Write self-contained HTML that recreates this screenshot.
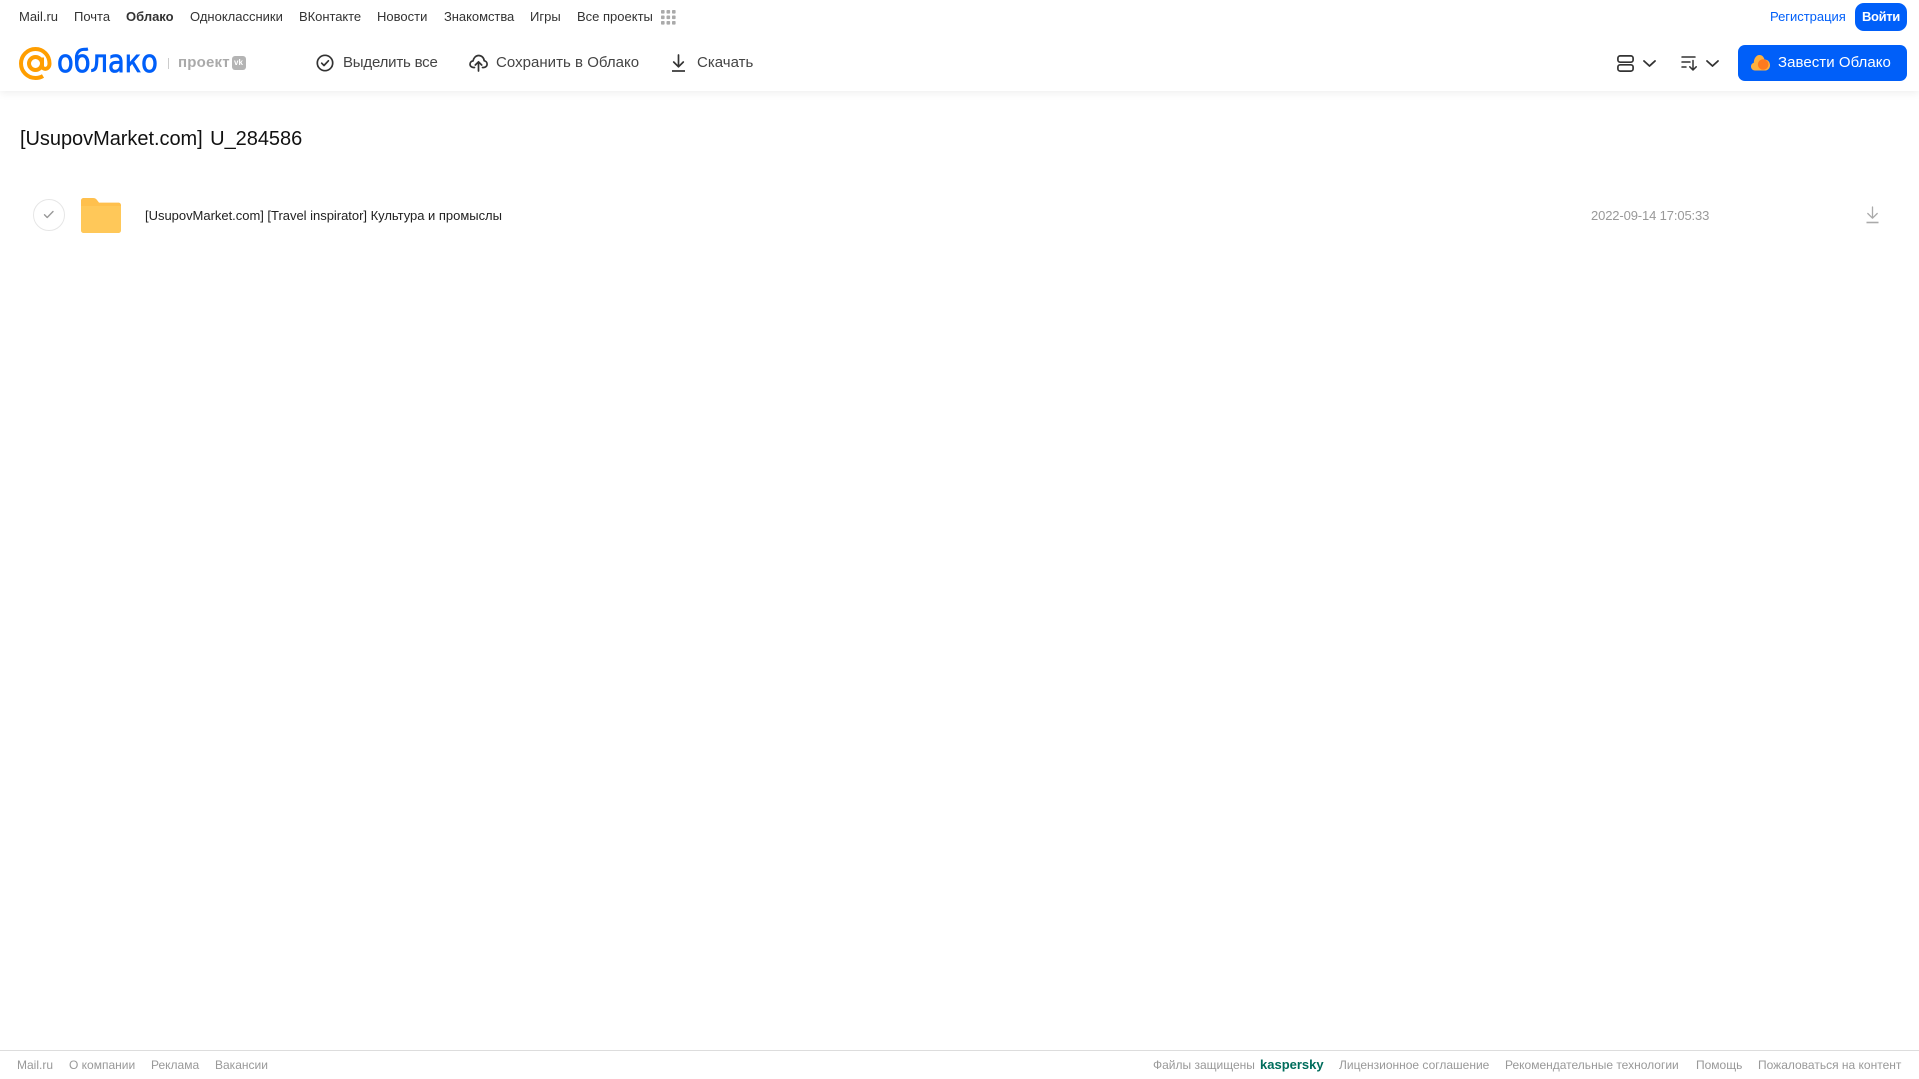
<!DOCTYPE html>
<html lang="ru"><head><meta charset="utf-8"><title>Облако</title>
<style>
html,body{margin:0;padding:0;background:#fff;}
body{width:1919px;height:1079px;position:relative;overflow:hidden;font-family:"Liberation Sans",Arial,sans-serif;}
.t{position:absolute;white-space:nowrap;line-height:20px;}
.n{top:7px;font-size:13px;color:#333;}
.b{top:53px;font-size:15px;color:#444;}
.f{top:1055px;font-size:12px;color:#999;}
svg{position:absolute;display:block;}
#hd{position:absolute;left:0;top:0;width:1919px;height:91px;background:#fff;box-shadow:0 2px 8px rgba(0,0,0,.07);}
</style></head><body>
<div id="hd"></div>
<span class="t n" style="left:19px">Mail.ru</span>
<span class="t n" style="left:74px">Почта</span>
<span class="t n" style="left:126px;font-weight:bold">Облако</span>
<span class="t n" style="left:190px">Одноклассники</span>
<span class="t n" style="left:299px;letter-spacing:-.05px">ВКонтакте</span>
<span class="t n" style="left:377px">Новости</span>
<span class="t n" style="left:444px;letter-spacing:-.05px">Знакомства</span>
<span class="t n" style="left:530px">Игры</span>
<span class="t n" style="left:577px">Все проекты</span>
<svg style="left:661px;top:10px" width="15" height="15" fill="#aaa"><rect x="0" y="0" width="3.6" height="3.6" rx=".8"/><rect x="5.5" y="0" width="3.6" height="3.6" rx=".8"/><rect x="11" y="0" width="3.6" height="3.6" rx=".8"/><rect x="0" y="5.5" width="3.6" height="3.6" rx=".8"/><rect x="5.5" y="5.5" width="3.6" height="3.6" rx=".8"/><rect x="11" y="5.5" width="3.6" height="3.6" rx=".8"/><rect x="0" y="11" width="3.6" height="3.6" rx=".8"/><rect x="5.5" y="11" width="3.6" height="3.6" rx=".8"/><rect x="11" y="11" width="3.6" height="3.6" rx=".8"/></svg>
<span class="t n" style="left:1770px;color:#005ff9;letter-spacing:-.02px">Регистрация</span>
<div style="position:absolute;left:1855px;top:3px;width:52px;height:28px;border-radius:9px;background:#005ff9"></div>
<span class="t" style="left:1862px;top:7px;font-size:13px;color:#fff;font-weight:bold;letter-spacing:-.35px">Войти</span>

<svg style="left:19px;top:47px" width="33" height="33" viewBox="0 0 33 33" fill="none" stroke="#ff9e00" stroke-width="4"><circle cx="16.5" cy="16.5" r="6.5"/><path d="M23 10.5v8.2c0 4.5 7.5 4.5 7.5-2.2C30.500 8.500 24.500 2 16.500 2S2 8.500 2 16.500 8.500 31 16.500 31c3 0 5.500-.8 7.500-2"/></svg>
<span class="t" style="left:57px;top:46px;line-height:32px;font-size:31px;color:#005ff9;font-weight:normal;-webkit-text-stroke:.8px #005ff9;font-family:'DejaVu Sans',sans-serif;transform:scaleX(.88);transform-origin:0 50%">облако</span>
<div style="position:absolute;left:168px;top:58px;width:1px;height:11px;background:#ccc"></div>
<span class="t" style="left:178px;top:53px;font-size:15px;color:#aaa;font-weight:bold;letter-spacing:.2px">проект</span>
<div style="position:absolute;left:232px;top:56px;width:14px;height:14px;border-radius:3px;background:#b4b4b4"></div>
<span class="t" style="left:234px;top:56px;line-height:14px;font-size:8px;color:#fff;font-weight:bold">vk</span>

<svg style="left:316px;top:54px" width="18" height="18" fill="none" stroke="#333" stroke-width="1.7"><circle cx="9" cy="9" r="7.7"/><path d="M5.700 9.200l2.300 2.300 4.400-4.700" stroke-linecap="round" stroke-linejoin="round"/></svg>
<span class="t b" style="left:343px;letter-spacing:-.2px">Выделить все</span>
<svg style="left:469px;top:54px" width="19" height="18" viewBox="0 0 19 18" fill="none" stroke="#333" stroke-width="1.7" stroke-linecap="round" stroke-linejoin="round"><path d="M5.500 13.500H4.500C2.500 13.500 1 12 1 10.200 1 8.400 2.400 7 4 7 4.600 3.800 6.800 1.500 9.700 1.500c3 0 5.200 2.300 5.500 5.300 1.700.2 2.900 1.600 2.900 3.300 0 1.900-1.500 3.400-3.400 3.400h-1.200"/><path d="M9.500 17V8M6.300 11l3.200-3.200L12.700 11"/></svg>
<span class="t b" style="left:496px;letter-spacing:.03px">Сохранить в Облако</span>
<svg style="left:670px;top:54px" width="17" height="18" fill="none" stroke="#333" stroke-width="1.7"><path d="M8.500 1v11.500M3.700 8l4.800 4.800L13.300 8" stroke-linecap="round" stroke-linejoin="round"/><path d="M2 17h13"/></svg>
<span class="t b" style="left:697px;letter-spacing:.02px">Скачать</span>

<svg style="left:1617px;top:55px" width="17" height="17" fill="none" stroke="#333" stroke-width="1.7"><rect x=".9" y=".9" width="15.200" height="6.300" rx="2.200"/><rect x=".9" y="9.800" width="15.200" height="6.300" rx="2.200"/></svg>
<svg style="left:1642px;top:59px" width="15" height="9" fill="none" stroke="#333" stroke-width="1.800" stroke-linecap="round" stroke-linejoin="round"><path d="M2 2l5.500 5L13 2"/></svg>
<svg style="left:1681px;top:55px" width="17" height="16" fill="none" stroke="#333" stroke-width="1.500" stroke-linecap="round" stroke-linejoin="round"><path d="M1 2h13M1 7h8M1 12h4"/><path d="M12 5.500V15M8.800 11.800l3.200 3.200 3.200-3.200"/></svg>
<svg style="left:1705px;top:59px" width="15" height="9" fill="none" stroke="#333" stroke-width="1.800" stroke-linecap="round" stroke-linejoin="round"><path d="M2 2l5.500 5L13 2"/></svg>
<div style="position:absolute;left:1738px;top:45px;width:169px;height:36px;border-radius:7px;background:#005ff9"></div>
<svg style="left:1750px;top:54px" width="21" height="17" viewBox="0 0 21 17"><path d="M5 16.500C2.500 16.500 1 14.500 1 12.500 1 10.500 2.300 9.200 3.800 8.800 3.800 5 6 1 9.500 1c3 0 4.500 2.500 5 4.500 3.500 0 5.500 2.700 5.500 5.700 0 3-2.200 5.300-5 5.300z" fill="#ffb13d"/><circle cx="13.200" cy="10.500" r="5.300" fill="#ff7a1f"/></svg>
<span class="t" style="left:1778px;top:53px;font-size:15px;color:#fff;letter-spacing:.05px">Завести Облако</span>

<span class="t" style="left:20px;top:126px;line-height:26px;font-size:20px;color:#111;letter-spacing:-.04px;word-spacing:2px">[UsupovMarket.com] U_284586</span>

<div style="position:absolute;left:33px;top:199px;width:30px;height:30px;border:1px solid #e6e6e6;border-radius:50%"></div>
<svg style="left:42px;top:209px" width="14" height="11" fill="none" stroke="#999" stroke-width="1.400" stroke-linecap="round" stroke-linejoin="round"><path d="M2.500 5.800l2.700 2.700 5.800-6"/></svg>
<svg style="left:81px;top:198px" width="40" height="35" viewBox="0 0 40 35"><path d="M2.500 0H12c2 0 3 .7 4 2l2 2.600h19.500c1.400 0 2.500 1.100 2.500 2.500V8H0V2.500C0 1.100 1.100 0 2.500 0z" fill="#ffc04d"/><path d="M0 8h40v24.500c0 1.400-1.100 2.500-2.500 2.500h-35C1.100 35 0 33.900 0 32.500z" fill="#ffc859"/></svg>
<span class="t" style="left:145px;top:206px;font-size:13px;color:#222;letter-spacing:-.02px">[UsupovMarket.com] [Travel inspirator] Культура и промыслы</span>
<span class="t" style="left:1591px;top:206px;font-size:13px;color:#999;letter-spacing:-.13px">2022-09-14 17:05:33</span>
<svg style="left:1865px;top:206px" width="15" height="18" fill="none" stroke="#aaa" stroke-width="1.300"><path d="M7.500 1v11M2.800 7.500l4.700 4.700 4.700-4.700" stroke-linecap="round" stroke-linejoin="round"/><path d="M1.500 16.500h12" stroke-width="1.600"/></svg>

<div style="position:absolute;left:0;top:1050px;width:1919px;height:1px;background:#ddd"></div>
<span class="t f" style="left:17px">Mail.ru</span>
<span class="t f" style="left:69px">О компании</span>
<span class="t f" style="left:151px">Реклама</span>
<span class="t f" style="left:215px">Вакансии</span>
<span class="t f" style="left:1153px">Файлы защищены</span>
<span class="t" style="left:1260px;top:1055px;font-size:13px;font-weight:bold;color:#006d5c">kaspersky</span>
<span class="t f" style="left:1339px">Лицензионное соглашение</span>
<span class="t f" style="left:1505px">Рекомендательные технологии</span>
<span class="t f" style="left:1696px">Помощь</span>
<span class="t f" style="left:1758px">Пожаловаться на контент</span>
</body></html>
